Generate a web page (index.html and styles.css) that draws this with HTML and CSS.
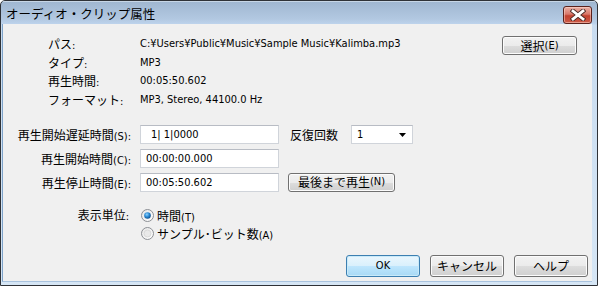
FILE: index.html
```html
<!DOCTYPE html>
<html lang="ja">
<head>
<meta charset="utf-8">
<title>オーディオ・クリップ属性</title>
<link rel="stylesheet" href="styles.css">
</head>
<body>
<div class="window">
  <div class="titlebar">
    <span class="title">オーディオ・クリップ属性</span>
    <span class="close">
      <svg width="16" height="12" viewBox="0 0 16 12">
        <path d="M3 2 L13 10 M13 2 L3 10" stroke="#4a2a26" stroke-width="4.6" stroke-linecap="square" fill="none"/>
        <path d="M3 2 L13 10 M13 2 L3 10" stroke="#ffffff" stroke-width="2.8" stroke-linecap="square" fill="none"/>
      </svg>
    </span>
  </div>
  <div class="client">
    <div class="info">
      <div class="info-row">
        <span class="ilabel"><span class="ja">パス</span>:</span>
        <span class="ivalue">C:¥Users¥Public¥Music¥Sample Music¥Kalimba.mp3</span>
        <button class="btn btn-select"><span class="ja">選択</span>(E)</button>
      </div>
      <div class="info-row"><span class="ilabel"><span class="ja">タイプ</span>:</span><span class="ivalue">MP3</span></div>
      <div class="info-row"><span class="ilabel"><span class="ja">再生時間</span>:</span><span class="ivalue">00:05:50.602</span></div>
      <div class="info-row"><span class="ilabel"><span class="ja">フォーマット</span>:</span><span class="ivalue">MP3, Stereo, 44100.0 Hz</span></div>
    </div>

    <div class="form">
      <div class="frow">
        <span class="flabel"><span class="ja">再生開始遅延時間</span>(S):</span>
        <div class="input input-delay">1|&nbsp;1|0000</div>
        <span class="repeat-label ja">反復回数</span>
        <div class="combo">
          <span>1</span>
          <svg class="arrow" width="7" height="4" viewBox="0 0 7 4"><path d="M0 0 H7 L3.5 4 Z" fill="#000"/></svg>
        </div>
      </div>
      <div class="frow">
        <span class="flabel"><span class="ja">再生開始時間</span>(C):</span>
        <div class="input">00:00:00.000</div>
      </div>
      <div class="frow">
        <span class="flabel"><span class="ja">再生停止時間</span>(E):</span>
        <div class="input">00:05:50.602</div>
        <button class="btn btn-toend"><span class="ja">最後まで再生</span>(N)</button>
      </div>
    </div>

    <div class="units">
      <span class="ulabel"><span class="ja">表示単位</span>:</span>
      <div class="radios">
        <div class="radio">
          <svg width="13" height="13" viewBox="0 0 13 13">
            <defs>
              <linearGradient id="rg" x1="0" y1="0" x2="1" y2="1">
                <stop offset="0" stop-color="#e6e6e6"/><stop offset="1" stop-color="#ffffff"/>
              </linearGradient>
              <radialGradient id="dot" cx="0.4" cy="0.35" r="0.7">
                <stop offset="0" stop-color="#8fd3ff"/><stop offset="0.5" stop-color="#2a8ad4"/><stop offset="1" stop-color="#0d4a86"/>
              </radialGradient>
            </defs>
            <circle cx="6.5" cy="6.5" r="6" fill="url(#rg)" stroke="#8c8f94"/>
            <circle cx="6.5" cy="6.5" r="3.3" fill="url(#dot)"/>
          </svg>
          <span><span class="ja">時間</span>(T)</span>
        </div>
        <div class="radio">
          <svg width="13" height="13" viewBox="0 0 13 13">
            <circle cx="6.5" cy="6.5" r="6" fill="url(#rg)" stroke="#8c8f94"/>
            <circle cx="6.5" cy="6.5" r="3.5" fill="#e9e9e9" stroke="#d4d4d4" stroke-width="0.8"/>
          </svg>
          <span><span class="ja">サンプル･ビット数</span>(A)</span>
        </div>
      </div>
    </div>

    <div class="footer">
      <button class="btn btn-footer btn-default">OK</button>
      <button class="btn btn-footer"><span class="ja">キャンセル</span></button>
      <button class="btn btn-footer"><span class="ja">ヘルプ</span></button>
    </div>
  </div>
</div>
</body>
</html>
```

FILE: styles.css
```css
* { box-sizing: border-box; }

html, body {
  margin: 0;
  padding: 0;
  width: 598px;
  height: 286px;
  overflow: hidden;
  background: #ffffff;
}

body {
  font-family: "DejaVu Sans Condensed", "DejaVu Sans", "Noto Sans CJK JP", sans-serif;
  font-stretch: condensed;
  font-size: 11px;
  color: #000;
}

.ja {
  font-family: "Noto Sans CJK JP", sans-serif;
  font-stretch: normal;
  font-size: 12px;
}

.window {
  width: 598px;
  height: 286px;
  border: 1px solid #2f3237;
  border-radius: 5px 5px 0 0;
  background: linear-gradient(#9fb6d0 0px, #b2c8e1 18px, #bdd3ec 23px, #c9dcf0 24px, #d6e6f5 100%);
  display: flex;
  flex-direction: column;
  overflow: hidden;
}

.titlebar {
  height: 23px;
  flex: none;
  display: flex;
  align-items: center;
  padding-left: 5px;
  padding-right: 5px;
  border-top: 1px solid #c7d6e6;
}

.title {
  font-family: "Noto Sans CJK JP", sans-serif;
  font-size: 12.5px;
  color: #000;
  line-height: 16px;
  flex: 1;
  margin-top: 1px;
}

.close {
  width: 29px;
  height: 18px;
  margin-top: 4px;
  border: 1px solid #5a211b;
  border-radius: 3px;
  background: linear-gradient(#eab0a5 0%, #d8786a 45%, #c2412f 55%, #cc5b47 100%);
  box-shadow: inset 0 0 0 1px rgba(255, 220, 210, 0.5);
  display: flex;
  align-items: center;
  justify-content: center;
}

.client {
  flex: 1;
  margin: 0 5px 3px 1px;
  background: #f0f0f0;
  border-left: 1px solid #7fa3c9;
  border-bottom: 1px solid #a9c3de;
  display: flex;
  flex-direction: column;
  padding: 11px 4px 4px 0;
}

/* info block */
.info {
  padding-left: 45px;
}

.info-row {
  height: 18.5px;
  line-height: 18.5px;
  display: flex;
  align-items: flex-start;
}

.ilabel {
  width: 92px;
  flex: none;
}

.ivalue {
  flex: 1;
  white-space: nowrap;
}

.btn {
  font-family: "DejaVu Sans Condensed", "DejaVu Sans", "Noto Sans CJK JP", sans-serif;
  font-stretch: condensed;
  font-size: 11px;
  color: #000;
  border: 1px solid #707070;
  border-radius: 3px;
  background: linear-gradient(#f2f2f2 0%, #ebebeb 50%, #dddddd 51%, #cfcfcf 100%);
  box-shadow: inset 0 0 0 1px #fcfcfc;
  padding: 0;
  display: flex;
  align-items: center;
  justify-content: center;
  line-height: 16px;
}

.btn-select {
  width: 75px;
  height: 19px;
  margin-top: 1px;
  margin-right: 11px;
  flex: none;
}

/* form block */
.form {
  margin-top: 16px;
  display: flex;
  flex-direction: column;
  gap: 5px;
}

.frow {
  height: 19px;
  display: flex;
  align-items: center;
}

.flabel {
  width: 128px;
  flex: none;
  text-align: right;
  white-space: nowrap;
}

.input {
  width: 139px;
  height: 19px;
  margin-left: 9px;
  flex: none;
  background: #fff;
  border: 1px solid #d0d4da;
  border-top-color: #b8bcc4;
  line-height: 17px;
  padding-left: 5px;
  white-space: nowrap;
}

.input-delay {
  padding-left: 10px;
}

.repeat-label {
  margin-left: 11px;
}

.combo {
  width: 62px;
  height: 19px;
  margin-left: 13px;
  background: #fff;
  border: 1px solid #d0d4da;
  border-top-color: #b8bcc4;
  display: flex;
  align-items: center;
  justify-content: space-between;
  padding: 0 6px 0 5px;
}

.arrow {
  display: block;
}

.btn-toend {
  width: 107px;
  height: 19px;
  margin-left: 9px;
  margin-top: -1px;
}

/* units */
.units {
  margin-top: 14px;
  display: flex;
}

.ulabel {
  width: 126px;
  flex: none;
  text-align: right;
  line-height: 18px;
  height: 18px;
}

.radios {
  margin-left: 12px;
  display: flex;
  flex-direction: column;
}

.radio {
  height: 18px;
  display: flex;
  align-items: center;
  gap: 3px;
  white-space: nowrap;
}

.radio svg {
  display: block;
}

/* footer */
.footer {
  margin-top: 13px;
  display: flex;
  justify-content: flex-end;
  gap: 10px;
}

.btn-footer {
  width: 74px;
  height: 22px;
}

.btn-default {
  border-color: #3c7fb1;
  box-shadow: inset 0 0 0 1px #c9eaf9;
  background: linear-gradient(#eaf6fd 0%, #d9f0fc 50%, #bee6fd 51%, #a7d9f5 100%);
}
```
